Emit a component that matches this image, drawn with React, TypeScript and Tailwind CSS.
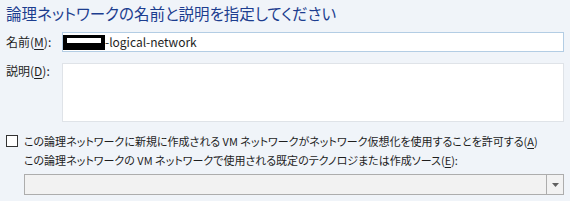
const jp = "font-['Segoe_UI','Noto_Sans_CJK_JP',sans-serif] [font-feature-settings:'palt']";

function Hotkey({ k }: { k: string }) {
  return (
    <>
      (<span className="underline underline-offset-2">{k}</span>)
    </>
  );
}

export default function App() {
  return (
    <div className={`w-[570px] h-[201px] bg-[#f0f4f9] text-[#1e1e1e] text-[11px] leading-none ${jp}`}>
      <div className="px-[6px] pt-[4px]">
        <h1 className="text-[15.5px] leading-[18px] text-[#1c3d8f]">
          論理ネットワークの名前と説明を指定してください
        </h1>

        <div className="mt-[10px] flex items-center">
          <label className="w-[56px] shrink-0 text-[12px]">
            名前<Hotkey k="M" />:
          </label>
          <div className="flex h-[20px] flex-1 items-center border border-[#b3cde4] bg-white text-[12px]">
            <span className="flex h-[15px] w-[42px] items-start bg-black px-[4px] pt-[3px]">
              <span className="h-[5px] w-full bg-white" />
            </span>
            <span>-logical-network</span>
          </div>
        </div>

        <div className="mt-[11px] flex items-start">
          <label className="w-[56px] shrink-0 pt-[2px] text-[12px]">
            説明<Hotkey k="D" />:
          </label>
          <div className="h-[59px] flex-1 border border-[#dfe3e8] bg-white" />
        </div>

        <label className="mt-[13px] flex items-center gap-[6px]">
          <span className="h-[12px] w-[12px] shrink-0 border border-[#333] bg-white" />
          <span className="whitespace-nowrap">
            この論理ネットワークに新規に作成される VM ネットワークがネットワーク仮想化を使用することを許可する
            <Hotkey k="A" />
          </span>
        </label>

        <div className="ml-[18px] mt-[8px]">
          <p className="whitespace-nowrap">
            この論理ネットワークの VM ネットワークで使用される既定のテクノロジまたは作成ソース
            <Hotkey k="E" />:
          </p>
          <div className="mt-[8px] flex h-[21px] border border-[#adadad] bg-[#f2f2f2]">
            <div className="flex-1" />
            <div className="flex w-[17px] items-center justify-center border-l border-[#adadad]">
              <svg width="7" height="4" viewBox="0 0 7 4">
                <path d="M0 0h7L3.5 4z" fill="#606060" />
              </svg>
            </div>
          </div>
        </div>
      </div>
    </div>
  );
}
